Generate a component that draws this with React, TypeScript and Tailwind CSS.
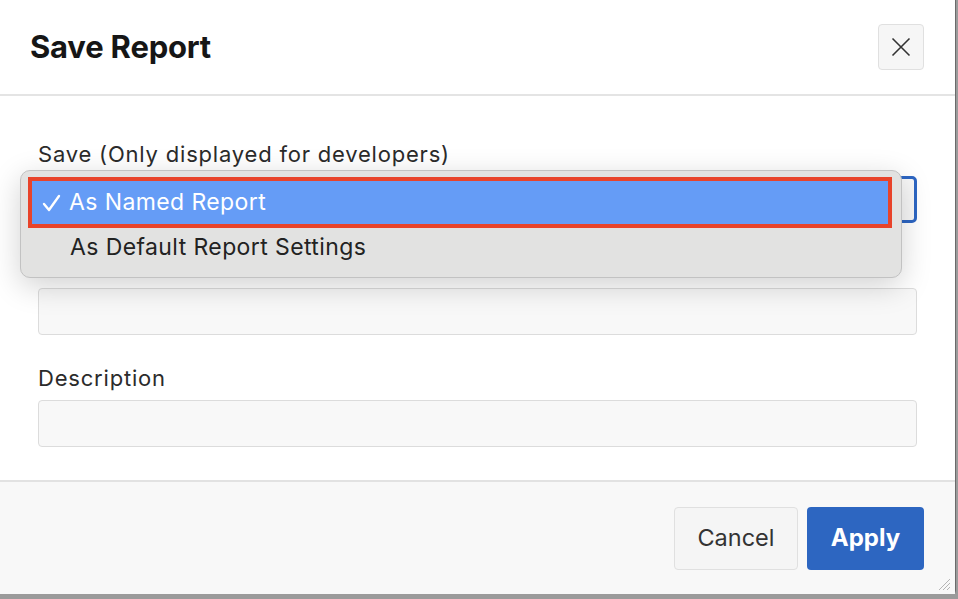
import React from 'react';

const font = { fontFamily: 'Inter, "Noto Sans", sans-serif' };

const Field: React.FC<{ label?: string; className?: string; children?: React.ReactNode }> = ({ label, className, children }) => (
    <div className={className}>
        {/* label under the open menu is hidden in the shot, keep its space */}
        <label className="block h-6 leading-6 text-[22px] tracking-[0.8px] text-[#2b2b2b] mb-[10px]">{label}</label>
        {children ?? (
            <div className="h-[47px] rounded-[4px] border border-[#dcdcdc] bg-[#f8f8f8]" />
        )}
    </div>
);

const App: React.FC = () => {
    return (
        <div className="w-[958px] h-[599px] bg-[#9b9b9b] overflow-hidden" style={font}>
            <div className="relative w-[956px] h-[594px] bg-white border-r border-[#6b6b6b] rounded-br-[4px] flex flex-col">
                {/* Header */}
                <header className="h-[96px] shrink-0 flex items-center justify-between pl-[30px] pr-[31px] border-b-2 border-[#e4e4e4]">
                    <h1 className="text-[31px] font-bold text-[#161616] tracking-[-0.2px]">Save Report</h1>
                    <button className="w-[46px] h-[46px] rounded-[4px] border border-[#e0e0e0] bg-[#f6f6f6] flex items-center justify-center text-[#333]">
                        <svg width="20" height="20" viewBox="0 0 20 20" fill="none" stroke="currentColor" strokeWidth="1.6">
                            <path d="M1.5 1.5 L18.5 18.5 M18.5 1.5 L1.5 18.5" />
                        </svg>
                    </button>
                </header>

                {/* Body */}
                <div className="flex-1 px-[38px] pt-[46px]">
                    <Field label="Save (Only displayed for developers)">
                        <div className="h-[47px] rounded-[5px] border-[3px] border-[#2d66c3] bg-[#f8f8f8]" />
                    </Field>
                    <Field className="mt-[31px]" />
                    <Field label="Description" className="mt-[31px]" />
                </div>

                {/* Footer */}
                <footer className="h-[114px] shrink-0 bg-[#f8f8f8] border-t-2 border-[#e2e2e2] flex items-center justify-end gap-[9px] pr-[31px]">
                    <button className="w-[124px] h-[63px] rounded-[4px] border border-[#e0e0e0] bg-[#f5f5f5] text-[23.5px] text-[#333]">
                        Cancel
                    </button>
                    <button className="w-[117px] h-[63px] rounded-[4px] bg-[#2d66c1] text-[24px] font-bold text-white">
                        Apply
                    </button>
                </footer>

                {/* resize grip */}
                <svg className="absolute right-[4px] bottom-[3px]" width="14" height="14" viewBox="0 0 14 14" stroke="#b5b5b5" strokeWidth="1">
                    <path d="M2 13 L13 2 M6 13 L13 6 M10 13 L13 10" />
                </svg>

                {/* Open select menu */}
                <div className="absolute left-[20px] top-[170px] w-[882px] h-[108px] rounded-[10px] border border-[#c2c2c2] bg-[#e2e2e1] shadow-[0_8px_30px_rgba(0,0,0,0.18)] pt-[6px] pl-[7px] pr-[9px]">
                    <div className="h-[51px] border-4 border-[#e8432a] bg-[#659cf6] flex items-center text-white text-[23px] tracking-[0.4px]">
                        <svg className="ml-[10px] mr-[8px]" width="19" height="18" viewBox="0 0 19 18" fill="none" stroke="white" strokeWidth="2.4" strokeLinecap="round" strokeLinejoin="round">
                            <path d="M2 10 L7 16 L17 2" />
                        </svg>
                        <span>As Named Report</span>
                    </div>
                    <div className="h-[39px] flex items-center pl-[42px] text-[23px] tracking-[0.4px] text-[#222]">
                        As Default Report Settings
                    </div>
                </div>
            </div>
        </div>
    );
};

export default App;
